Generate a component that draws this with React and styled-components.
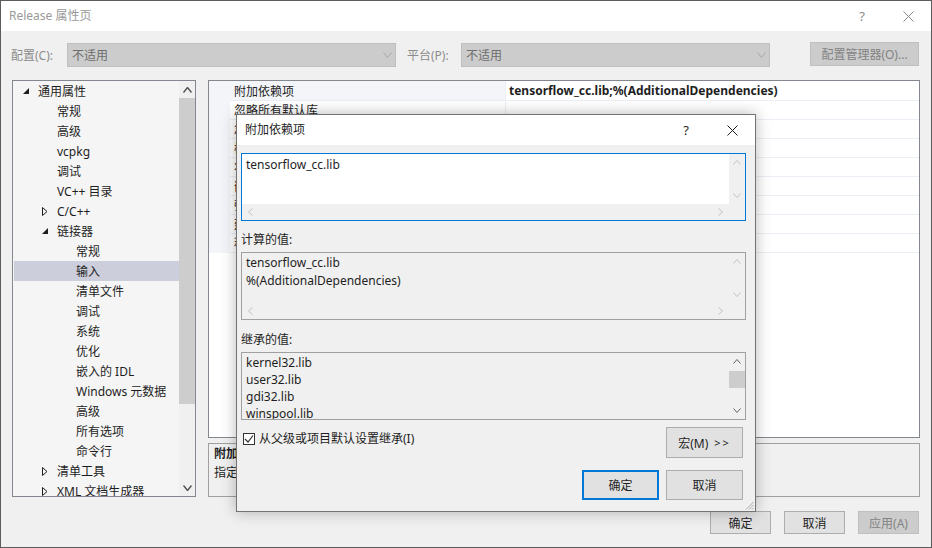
import React from 'react';
import styled, { createGlobalStyle } from 'styled-components';

const GlobalStyle = createGlobalStyle`
  html, body {
    margin: 0;
    padding: 0;
    background: #f0f0f0;
  }
  body {
    font-family: "Noto Sans", "Noto Sans CJK SC", sans-serif;
    font-size: 12px;
    color: #1e1e1e;
  }
  * {
    box-sizing: border-box;
  }
`;

// 外层窗口
const Window = styled.div`
  position: relative;
  width: 932px;
  height: 548px;
  border: 1px solid #5c5c5c;
  background: #f0f0f0;
  display: flex;
  flex-direction: column;
  overflow: hidden;
`;

const TitleBar = styled.div`
  height: 30px;
  flex-shrink: 0;
  background: #fff;
  display: flex;
  align-items: center;
  padding-left: 8px;
  color: ${(p) => (p.$dim ? '#9a9a9a' : '#1e1e1e')};
`;

const TitleText = styled.span`
  line-height: 16px;
`;

const CaptionGroup = styled.div`
  margin-left: auto;
  display: flex;
  height: 100%;
`;

const CaptionButton = styled.div`
  width: 46px;
  height: 100%;
  display: flex;
  align-items: center;
  justify-content: center;
  font-size: 13px;
  color: ${(p) => (p.$dim ? '#8a8a8a' : '#1e1e1e')};
`;

const ConfigRow = styled.div`
  display: flex;
  align-items: center;
  height: 24px;
  margin-top: 12px;
  padding-left: 10px;
  padding-right: 12px;
`;

const FieldLabel = styled.span`
  width: ${(p) => p.$w}px;
  margin-left: ${(p) => p.$ml || 0}px;
  color: #8c8c8c;
  white-space: nowrap;
`;

const Combo = styled.div`
  width: ${(p) => p.$w}px;
  height: 24px;
  background: #cccccc;
  border: 1px solid #bfbfbf;
  display: flex;
  align-items: center;
  padding: 0 3px 0 4px;
  color: #6d6d6d;
`;

const ComboArrow = styled.span`
  margin-left: auto;
  display: flex;
`;

const ManagerButton = styled.div`
  margin-left: auto;
  margin-top: -2px;
  width: 109px;
  height: 24px;
  background: #cccccc;
  border: 1px solid #bfbfbf;
  color: #838383;
  display: flex;
  align-items: center;
  justify-content: center;
`;

const Main = styled.div`
  display: flex;
  gap: 12px;
  margin-top: 13px;
  padding: 0 11px;
  height: 417px;
  flex-shrink: 0;
`;

// 左侧树
const Tree = styled.div`
  width: 184px;
  border: 1px solid #828790;
  background: #f5f5f5;
  display: flex;
`;

const TreeList = styled.div`
  flex: 1;
  padding-left: 1px;
  overflow: hidden;
`;

const TreeRow = styled.div`
  height: 20px;
  display: flex;
  align-items: center;
  padding-left: ${(p) => 7 + p.$level * 19}px;
  background: ${(p) => (p.$selected ? '#cccedb' : 'transparent')};
  white-space: nowrap;
`;

const ArrowSlot = styled.span`
  width: 17px;
  display: flex;
  align-items: center;
  padding-left: 2px;
`;

const VScroll = styled.div`
  width: 16px;
  flex-shrink: 0;
  display: flex;
  flex-direction: column;
  background: #f0f0f0;
`;

const ScrollArrow = styled.div`
  height: ${(p) => p.$h || 17}px;
  flex-shrink: 0;
  display: flex;
  align-items: center;
  justify-content: center;
`;

const ScrollTrack = styled.div`
  flex: 1;
  display: flex;
  flex-direction: column;
`;

const Thumb = styled.div`
  height: ${(p) => p.$h}px;
  margin-top: ${(p) => p.$top || 0}px;
  background: #cdcdcd;
`;

// 右侧属性网格
const Right = styled.div`
  flex: 1;
  display: flex;
  flex-direction: column;
  gap: 5px;
`;

const Grid = styled.div`
  height: 358px;
  flex-shrink: 0;
  border: 1px solid #828790;
  background: #fff;
  overflow: hidden;
`;

const GridRow = styled.div`
  display: flex;
  height: ${(p) => (p.$first ? 20 : 19)}px;
`;

const Gutter = styled.div`
  width: 21px;
  background: #f3f5f9;
`;

const LabelCell = styled.div`
  width: 275px;
  padding-left: 4px;
  display: flex;
  align-items: center;
  border-bottom: 1px solid #eceff5;
  background: ${(p) => (p.$active ? '#f3f5f9' : '#fff')};
  white-space: nowrap;
  overflow: hidden;
`;

const ValueCell = styled.div`
  flex: 1;
  padding-left: 3px;
  display: flex;
  align-items: center;
  border-left: 1px solid #eceff5;
  border-bottom: 1px solid #eceff5;
  font-weight: ${(p) => (p.$bold ? 700 : 400)};
  white-space: nowrap;
`;

const DescPanel = styled.div`
  height: 54px;
  border: 1px solid #a0a0a0;
  background: #f0f0f0;
  padding: 0 5px;
  line-height: 19px;
`;

const DescTitle = styled.div`
  font-weight: 700;
`;

const Footer = styled.div`
  display: flex;
  justify-content: flex-end;
  gap: 13px;
  margin-top: 14px;
  padding-right: 12px;
`;

const WinButton = styled.div`
  width: 61px;
  height: 23px;
  display: flex;
  align-items: center;
  justify-content: center;
  background: ${(p) => (p.$disabled ? '#cccccc' : '#e1e1e1')};
  border: 1px solid ${(p) => (p.$disabled ? '#bfbfbf' : '#adadad')};
  color: ${(p) => (p.$disabled ? '#838383' : '#1e1e1e')};
`;

// 弹出对话框
const Modal = styled.div`
  position: absolute;
  left: 235px;
  top: 113px;
  width: 520px;
  height: 398px;
  border: 1px solid #737373;
  background: #f0f0f0;
  box-shadow: 0 0 14px rgba(0, 0, 0, 0.28);
  display: flex;
  flex-direction: column;
`;

const ModalBody = styled.div`
  flex: 1;
  display: flex;
  flex-direction: column;
  padding: 8px 9px 0 4px;
  position: relative;
`;

const EditBox = styled.div`
  height: 68px;
  flex-shrink: 0;
  border: 1px solid ${(p) => (p.$focus ? '#0078d7' : '#a0a0a0')};
  background: ${(p) => (p.$focus ? '#fff' : '#f0f0f0')};
  display: grid;
  grid-template-columns: 1fr 16px;
  grid-template-rows: ${(p) => (p.$hbar ? '1fr 16px' : '1fr')};
  overflow: hidden;
`;

const EditText = styled.div`
  padding: ${(p) => p.$pt}px 4px 0;
  line-height: ${(p) => p.$lh}px;
  white-space: pre;
  overflow: hidden;
  min-height: 0;
`;

const HScroll = styled.div`
  display: flex;
  justify-content: space-between;
  background: #f0f0f0;
`;

const HArrow = styled.div`
  width: 17px;
  display: flex;
  align-items: center;
  justify-content: center;
`;

const Corner = styled.div`
  background: #f0f0f0;
`;

const SectionLabel = styled.div`
  margin-top: ${(p) => p.$mt}px;
  margin-bottom: 4px;
  line-height: 17px;
`;

const CheckRow = styled.div`
  display: flex;
  justify-content: space-between;
  margin-top: 7px;
  padding-right: 3px;
`;

const CheckLabel = styled.label`
  display: flex;
  align-items: center;
  gap: 4px;
  margin-top: 5px;
  margin-left: 2px;
  height: 14px;
  line-height: 14px;
`;

const CheckBox = styled.span`
  width: 12px;
  height: 12px;
  border: 1px solid #333;
  background: #fff;
  display: flex;
  align-items: center;
  justify-content: center;
`;

const DialogButton = styled.div`
  width: 77px;
  height: ${(p) => p.$h || 30}px;
  display: flex;
  align-items: center;
  justify-content: center;
  background: #e1e1e1;
  border: ${(p) => (p.$default ? '2px solid #0078d7' : '1px solid #adadad')};
  gap: 6px;
`;

const Chevrons = styled.span`
  font-size: 11px;
  letter-spacing: 2px;
`;

const ButtonRow = styled.div`
  display: flex;
  justify-content: flex-end;
  gap: 7px;
  margin-top: 12px;
  padding-right: 3px;
`;

const Grip = styled.span`
  position: absolute;
  right: 1px;
  bottom: 1px;
  display: flex;
`;

const Chevron = ({ dir = 'down', color = '#606060', size = 8, stroke = 1 }) => {
  const h = Math.round(size / 2) + 1;
  const vertical = dir === 'up' || dir === 'down';
  const w = vertical ? size : h;
  const hh = vertical ? h : size;
  const pts = {
    down: `0.5,0.5 ${size / 2},${h - 0.5} ${size - 0.5},0.5`,
    up: `0.5,${h - 0.5} ${size / 2},0.5 ${size - 0.5},${h - 0.5}`,
    left: `${h - 0.5},0.5 0.5,${size / 2} ${h - 0.5},${size - 0.5}`,
    right: `0.5,0.5 ${h - 0.5},${size / 2} 0.5,${size - 0.5}`,
  }[dir];
  return (
    <svg width={w} height={hh} viewBox={`0 0 ${w} ${hh}`}>
      <polyline points={pts} fill="none" stroke={color} strokeWidth={stroke} />
    </svg>
  );
};

const CloseIcon = ({ color }) => (
  <svg width="11" height="11" viewBox="0 0 11 11">
    <path d="M0.5 0.5 L10.5 10.5 M10.5 0.5 L0.5 10.5" stroke={color} strokeWidth="1" />
  </svg>
);

const Expanded = () => (
  <svg width="6" height="6" viewBox="0 0 6 6">
    <polygon points="6,0 6,6 0,6" fill="#1e1e1e" />
  </svg>
);

const Collapsed = () => (
  <svg width="6" height="9" viewBox="0 0 6 9">
    <polygon points="0.5,0.5 5,4.5 0.5,8.5" fill="none" stroke="#1e1e1e" strokeWidth="1" />
  </svg>
);

const treeItems = [
  { t: '通用属性', l: 0, a: 'open' },
  { t: '常规', l: 1 },
  { t: '高级', l: 1 },
  { t: 'vcpkg', l: 1 },
  { t: '调试', l: 1 },
  { t: 'VC++ 目录', l: 1 },
  { t: 'C/C++', l: 1, a: 'closed' },
  { t: '链接器', l: 1, a: 'open' },
  { t: '常规', l: 2 },
  { t: '输入', l: 2, sel: true },
  { t: '清单文件', l: 2 },
  { t: '调试', l: 2 },
  { t: '系统', l: 2 },
  { t: '优化', l: 2 },
  { t: '嵌入的 IDL', l: 2 },
  { t: 'Windows 元数据', l: 2 },
  { t: '高级', l: 2 },
  { t: '所有选项', l: 2 },
  { t: '命令行', l: 2 },
  { t: '清单工具', l: 1, a: 'closed' },
  { t: 'XML 文档生成器', l: 1, a: 'closed' },
];

const gridRows = [
  ['附加依赖项', 'tensorflow_cc.lib;%(AdditionalDependencies)'],
  ['忽略所有默认库', ''],
  ['忽略特定默认库', ''],
  ['模块定义文件', ''],
  ['将模块添加到程序集', ''],
  ['嵌入托管资源文件', ''],
  ['强制符号引用', ''],
  ['延迟加载的 DLL', ''],
  ['程序集链接资源', ''],
];

const VBar = ({ enabled, thumb }) => {
  const c = enabled ? '#606060' : '#c2c2c2';
  return (
    <VScroll>
      <ScrollArrow>
        <Chevron dir="up" color={c} size={8} />
      </ScrollArrow>
      <ScrollTrack>{thumb && <Thumb $top={1} $h={thumb} />}</ScrollTrack>
      <ScrollArrow>
        <Chevron dir="down" color={c} size={8} />
      </ScrollArrow>
    </VScroll>
  );
};

const HBar = () => (
  <HScroll>
    <HArrow>
      <Chevron dir="left" color="#c2c2c2" size={8} />
    </HArrow>
    <HArrow>
      <Chevron dir="right" color="#c2c2c2" size={8} />
    </HArrow>
  </HScroll>
);

const App = () => {
  return (
    <>
      <GlobalStyle />
      <Window>
        <TitleBar $dim>
          <TitleText>Release 属性页</TitleText>
          <CaptionGroup>
            <CaptionButton $dim>?</CaptionButton>
            <CaptionButton $dim>
              <CloseIcon color="#8a8a8a" />
            </CaptionButton>
          </CaptionGroup>
        </TitleBar>

        <ConfigRow>
          <FieldLabel $w={56}>配置(C):</FieldLabel>
          <Combo $w={329}>
            不适用
            <ComboArrow>
              <Chevron dir="down" color="#a8a8a8" size={9} />
            </ComboArrow>
          </Combo>
          <FieldLabel $w={54} $ml={11}>平台(P):</FieldLabel>
          <Combo $w={309}>
            不适用
            <ComboArrow>
              <Chevron dir="down" color="#a8a8a8" size={9} />
            </ComboArrow>
          </Combo>
          <ManagerButton>配置管理器(O)...</ManagerButton>
        </ConfigRow>

        <Main>
          <Tree>
            <TreeList>
              {treeItems.map((it, i) => (
                <TreeRow key={i} $level={it.l} $selected={it.sel}>
                  <ArrowSlot>
                    {it.a === 'open' && <Expanded />}
                    {it.a === 'closed' && <Collapsed />}
                  </ArrowSlot>
                  {it.t}
                </TreeRow>
              ))}
            </TreeList>
            <VScroll>
              <ScrollArrow>
                <Chevron dir="up" color="#505050" size={9} stroke={1.4} />
              </ScrollArrow>
              <ScrollTrack>
                <Thumb $h={306} />
              </ScrollTrack>
              <ScrollArrow>
                <Chevron dir="down" color="#505050" size={9} stroke={1.4} />
              </ScrollArrow>
            </VScroll>
          </Tree>

          <Right>
            <Grid>
              {gridRows.map(([label, value], i) => (
                <GridRow key={i} $first={i === 0}>
                  <Gutter />
                  <LabelCell $active={i === 0}>{label}</LabelCell>
                  <ValueCell $bold={i === 0}>{value}</ValueCell>
                </GridRow>
              ))}
            </Grid>
            <DescPanel>
              <DescTitle>附加依赖项</DescTitle>
              <div>指定要添加到链接命令行的附加项。[例如 kernel32.lib]</div>
            </DescPanel>
          </Right>
        </Main>

        <Footer>
          <WinButton>确定</WinButton>
          <WinButton>取消</WinButton>
          <WinButton $disabled>应用(A)</WinButton>
        </Footer>

        <Modal>
          <TitleBar>
            <TitleText>附加依赖项</TitleText>
            <CaptionGroup>
              <CaptionButton>?</CaptionButton>
              <CaptionButton>
                <CloseIcon color="#1e1e1e" />
              </CaptionButton>
            </CaptionGroup>
          </TitleBar>
          <ModalBody>
            <EditBox $focus $hbar>
              <EditText $pt={2} $lh={18}>tensorflow_cc.lib</EditText>
              <VBar />
              <HBar />
              <Corner />
            </EditBox>

            <SectionLabel $mt={10}>计算的值:</SectionLabel>
            <EditBox $hbar>
              <EditText $pt={1} $lh={18}>
                {'tensorflow_cc.lib\n%(AdditionalDependencies)'}
              </EditText>
              <VBar />
              <HBar />
              <Corner />
            </EditBox>

            <SectionLabel $mt={11}>继承的值:</SectionLabel>
            <EditBox>
              <EditText $pt={1} $lh={17}>
                {'kernel32.lib\nuser32.lib\ngdi32.lib\nwinspool.lib\ncomdlg32.lib'}
              </EditText>
              <VBar enabled thumb={17} />
            </EditBox>

            <CheckRow>
              <CheckLabel>
                <CheckBox>
                  <svg width="10" height="10" viewBox="0 0 10 10">
                    <polyline points="1,5 4,8 9,1.5" fill="none" stroke="#333" strokeWidth="1.2" />
                  </svg>
                </CheckBox>
                从父级或项目默认设置继承(I)
              </CheckLabel>
              <DialogButton $h={31}>
                <span>宏(M)</span>
                <Chevrons>&gt;&gt;</Chevrons>
              </DialogButton>
            </CheckRow>

            <ButtonRow>
              <DialogButton $default>确定</DialogButton>
              <DialogButton>取消</DialogButton>
            </ButtonRow>

            <Grip>
              <svg width="10" height="10" viewBox="0 0 10 10">
                <path d="M9.5 2 L2 9.5 M9.5 5 L5 9.5 M9.5 8 L8 9.5" stroke="#a8a8a8" strokeWidth="1" />
              </svg>
            </Grip>
          </ModalBody>
        </Modal>
      </Window>
    </>
  );
};

export default App;
